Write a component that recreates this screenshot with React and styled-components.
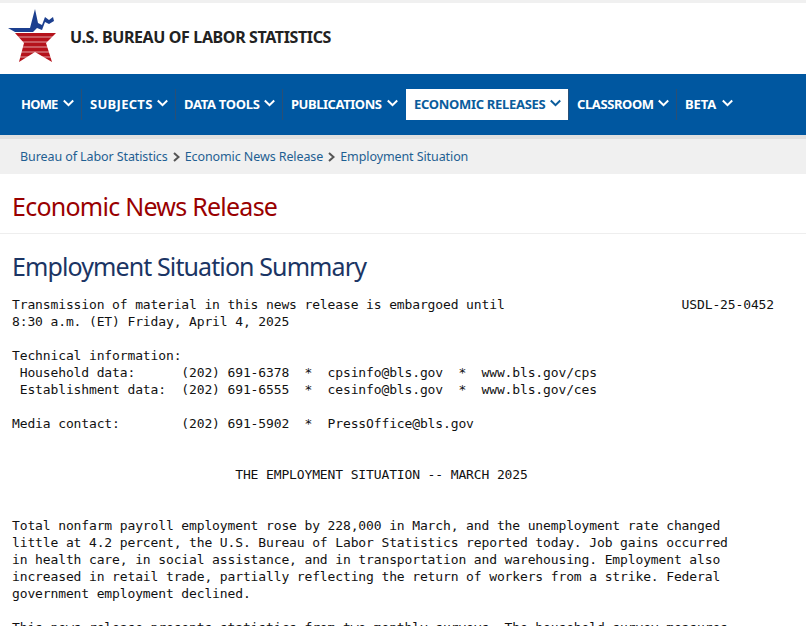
import React from "react";
import styled, { createGlobalStyle } from "styled-components";

const Global = createGlobalStyle`
  html, body { margin: 0; padding: 0; height: 626px; overflow: hidden; background: #fff; }
  #root { height: 626px; overflow: hidden; }
`;
const Page = styled.div`
  border-top: 3px solid #f0f0f0;
  font-family: "Noto Sans", sans-serif;
`;
const Masthead = styled.header`
  height: 71px;
  display: flex;
  align-items: flex-start;
  gap: 12px;
  padding: 5px 0 0 8px;
  box-sizing: border-box;
`;
const LogoMark = styled.svg`
  flex: none;
`;
const AgencyName = styled.span`
  font-size: 16px;
  line-height: 22px;
  font-weight: 700;
  color: #222;
  letter-spacing: -0.37px;
  margin-top: 18px;
`;
const NavBar = styled.nav`
  height: 61px;
  background: #0057a0;
  display: flex;
  align-items: flex-start;
  padding: 15px 0 0 13px;
  box-sizing: border-box;
`;
const NavItem = styled.a`
  height: 31px;
  box-sizing: border-box;
  display: flex;
  align-items: center;
  gap: 5px;
  padding: 0 7px 2px 8px;
  font-size: 13px;
  font-weight: 700;
  letter-spacing: ${(p) => p.$tracking}px;
  white-space: nowrap;
  color: ${(p) => (p.$active ? "#0a5c9c" : "#fff")};
  background: ${(p) => (p.$active ? "#fff" : "transparent")};
  border-right: 1px solid ${(p) => (p.$noRule ? "transparent" : "#2a4f75")};
`;
const NavLabel = styled.span`
  display: block;
  width: ${(p) => p.$width}px;
`;
const Chevron = styled.svg`
  width: 11px;
  height: 8px;
  margin-top: -2px;
  flex: none;
`;
const Crumbs = styled.div`
  height: 39px;
  box-sizing: border-box;
  border-top: 4px solid #e0e0e0;
  background: #f0f0f0;
  display: flex;
  align-items: center;
  padding-left: 20px;
  gap: 4px;
  font-size: 12.5px;
  color: #1f5f92;
  letter-spacing: -0.09px;
`;
const CrumbArrow = styled.svg`
  width: 9px;
  height: 10px;
  flex: none;
`;
const Title = styled.h1`
  margin: 0;
  height: 60px;
  box-sizing: border-box;
  padding: 14px 0 0 12px;
  font-size: 25px;
  line-height: 36px;
  font-weight: 400;
  color: #990000;
  letter-spacing: -0.75px;
  border-bottom: 1px solid #eee;
`;
const Subtitle = styled.h2`
  margin: 0;
  padding: 14px 0 0 12px;
  height: 62px;
  box-sizing: border-box;
  font-size: 25px;
  line-height: 36px;
  font-weight: 400;
  color: #1b3564;
  letter-spacing: -0.9px;
`;
const Release = styled.pre`
  margin: 0;
  padding: 0 0 0 12px;
  font-family: "DejaVu Sans Mono", monospace;
  font-size: 13px;
  line-height: 17px;
  letter-spacing: -0.13px;
  color: #111;
`;

const items = [
  { label: "HOME", width: 37, tracking: -0.8 },
  { label: "SUBJECTS", width: 62, tracking: 0.3 },
  { label: "DATA TOOLS", width: 75, tracking: -0.3 },
  { label: "PUBLICATIONS", width: 91, tracking: -0.45, noRule: true },
  { label: "ECONOMIC RELEASES", width: 131, tracking: -0.3, active: true },
  { label: "CLASSROOM", width: 76, tracking: -0.4 },
  { label: "BETA", width: 32, tracking: -0.1, noRule: true },
];

const text = `Transmission of material in this news release is embargoed until                       USDL-25-0452
8:30 a.m. (ET) Friday, April 4, 2025

Technical information:
 Household data:      (202) 691-6378  *  cpsinfo@bls.gov  *  www.bls.gov/cps
 Establishment data:  (202) 691-6555  *  cesinfo@bls.gov  *  www.bls.gov/ces

Media contact:        (202) 691-5902  *  PressOffice@bls.gov


                             THE EMPLOYMENT SITUATION -- MARCH 2025


Total nonfarm payroll employment rose by 228,000 in March, and the unemployment rate changed
little at 4.2 percent, the U.S. Bureau of Labor Statistics reported today. Job gains occurred
in health care, in social assistance, and in transportation and warehousing. Employment also
increased in retail trade, partially reflecting the return of workers from a strike. Federal
government employment declined.

This news release presents statistics from two monthly surveys. The household survey measures`;

const Logo = () => (
  <LogoMark width="50" height="56" viewBox="8 8 50 56">
    <polygon fill="#1c3f8f" points="8,28 30,28 35,9 38,23 42,25 45,17 49,20 53,17 54,21 49,24 45,22 42,30 37,28 33,32 15,32" />
    <polygon fill="#b5121b" points="15,33 56,33 46,43 52,62 35,52 19,62 24,43" />
    <g fill="#fff" opacity="0.6">
      <rect x="15" y="36.5" width="41" height="1" />
      <rect x="15" y="41.5" width="41" height="1" />
      <rect x="15" y="46.5" width="41" height="1" />
      <rect x="15" y="51.5" width="41" height="1" />
      <rect x="15" y="56.5" width="41" height="1" />
    </g>
  </LogoMark>
);

const Arrow = () => (
  <CrumbArrow viewBox="0 0 9 10">
    <polyline points="2,1 6.5,5 2,9" fill="none" stroke="#555" strokeWidth="2" />
  </CrumbArrow>
);

export default function App() {
  return (
    <Page>
      <Global />
      <Masthead>
        <Logo />
        <AgencyName>U.S. BUREAU OF LABOR STATISTICS</AgencyName>
      </Masthead>
      <NavBar>
        {items.map((item) => (
          <NavItem key={item.label} $active={item.active} $noRule={item.noRule} $tracking={item.tracking}>
            <NavLabel $width={item.width}>{item.label}</NavLabel>
            <Chevron viewBox="0 0 11 8">
              <polyline points="0.8,1.5 5.5,6.2 10.2,1.5" fill="none" stroke="currentColor" strokeWidth="2" />
            </Chevron>
          </NavItem>
        ))}
      </NavBar>
      <Crumbs>
        <span>Bureau of Labor Statistics</span>
        <Arrow />
        <span>Economic News Release</span>
        <Arrow />
        <span>Employment Situation</span>
      </Crumbs>
      <main>
        <Title>Economic News Release</Title>
        <Subtitle>Employment Situation Summary</Subtitle>
        <Release>{text}</Release>
      </main>
    </Page>
  );
}
